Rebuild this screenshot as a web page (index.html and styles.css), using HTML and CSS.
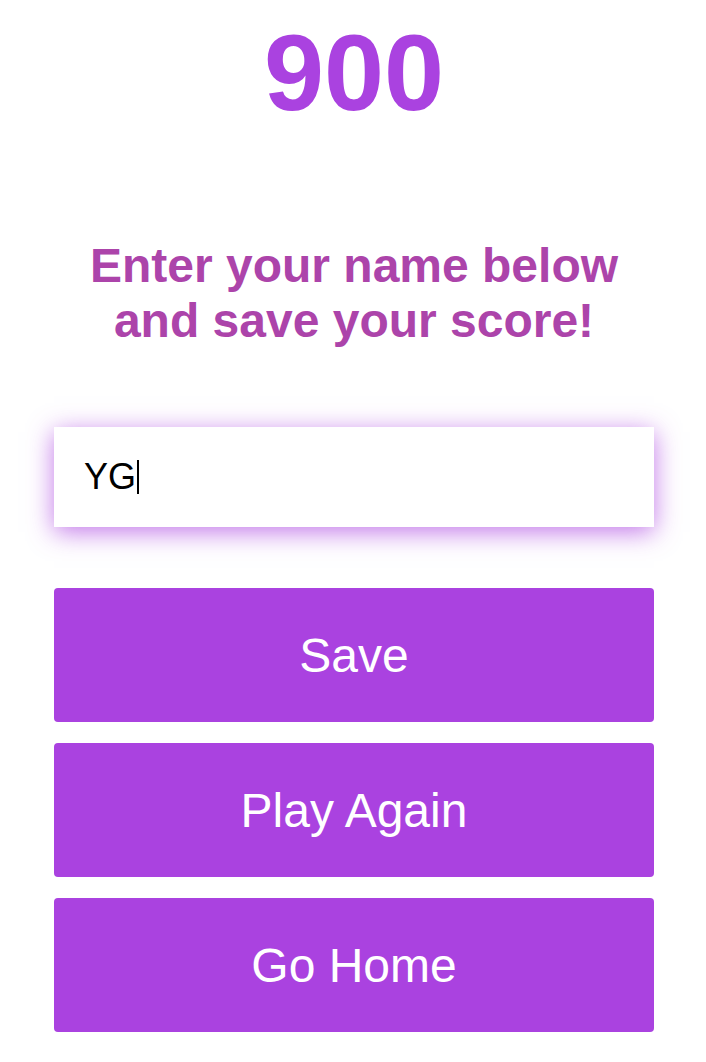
FILE: index.html
```html
<!DOCTYPE html>
<html lang="en">
<head>
<meta charset="utf-8">
<title>Game Over</title>
<link rel="stylesheet" href="styles.css">
</head>
<body>
<main class="end">
  <h1 class="score">900</h1>
  <h2 class="prompt">Enter your name below<br>and save your score!</h2>
  <form class="save-form">
    <div class="name-field"><span class="name-text">YG</span><span class="caret"></span></div>
    <div class="actions">
      <button type="button" class="btn">Save</button>
      <button type="button" class="btn">Play Again</button>
      <button type="button" class="btn">Go Home</button>
    </div>
  </form>
</main>
</body>
</html>
```
FILE: styles.css
```css
html, body {
  margin: 0;
  padding: 0;
  background: #ffffff;
}
body {
  font-family: "Liberation Sans", Arial, sans-serif;
}
.end {
  width: 600px;
  margin: 0 0 0 54px;
  padding-top: 10px;
  display: flex;
  flex-direction: column;
  align-items: stretch;
}
.score {
  margin: 0;
  text-align: center;
  font-size: 108px;
  font-weight: 700;
  color: #aa42e0;
  line-height: normal;
}
.prompt {
  margin: 103px 0 0;
  text-align: center;
  font-size: 48px;
  font-weight: 700;
  color: #ac44aa;
  line-height: normal;
}
.save-form {
  margin-top: 79px;
  display: flex;
  flex-direction: column;
}
.name-field {
  height: 100px;
  box-sizing: border-box;
  padding-left: 30px;
  display: flex;
  align-items: center;
  background: #fff;
  box-shadow: 0 5px 24px rgba(170, 66, 224, 0.72);
  font-size: 36px;
  color: #000;
}
.caret {
  display: inline-block;
  width: 2px;
  height: 34px;
  background: #000;
  margin-left: 1px;
}
.actions {
  margin-top: 61px;
  display: flex;
  flex-direction: column;
  gap: 21px;
}
.btn {
  height: 134px;
  border: none;
  border-radius: 4px;
  background: #aa42e0;
  color: #fff;
  font-family: "Liberation Sans", Arial, sans-serif;
  font-size: 48px;
  padding: 0;
  cursor: pointer;
}
```
